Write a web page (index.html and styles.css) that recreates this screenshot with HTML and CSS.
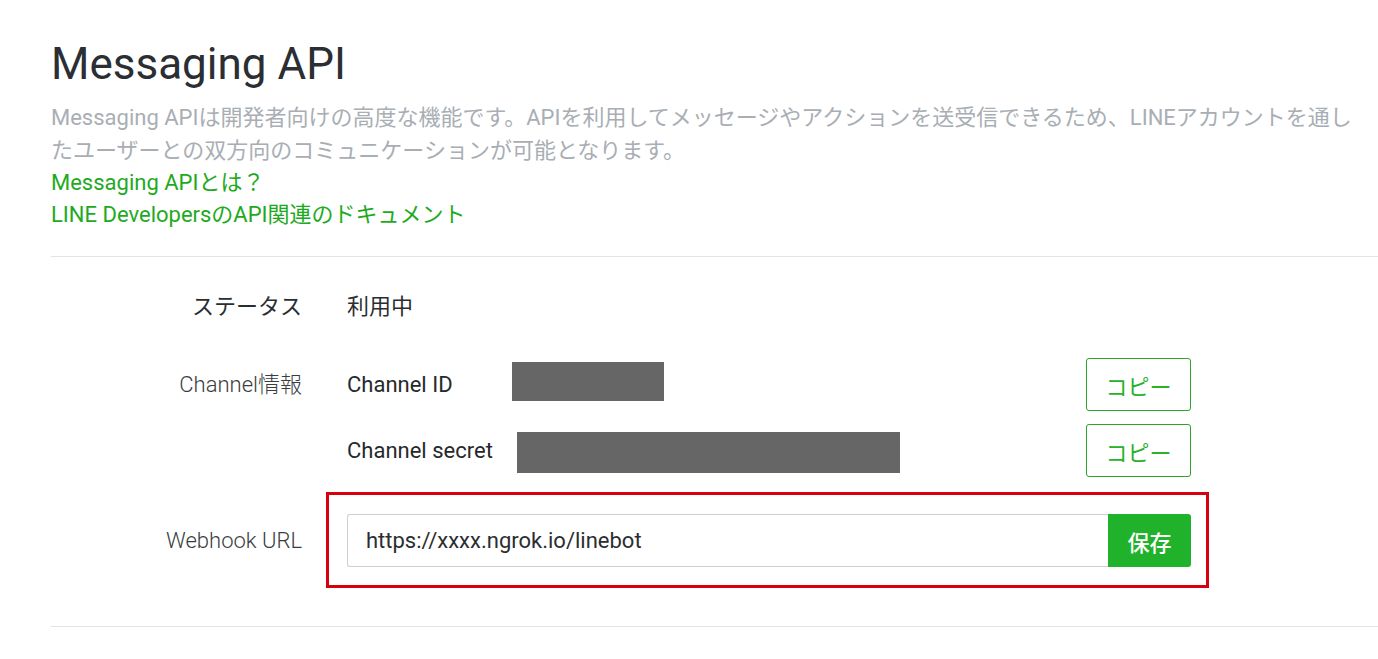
FILE: index.html
```html
<!DOCTYPE html>
<html lang="ja">
<head>
<meta charset="utf-8">
<title>Messaging API</title>
<link rel="stylesheet" href="styles.css">
</head>
<body>
<main class="page">
  <header class="intro">
    <h1 class="title">Messaging API</h1>
    <p class="desc">Messaging APIは開発者向けの高度な機能です。APIを利用してメッセージやアクションを送受信できるため、LINEアカウントを通し<br>たユーザーとの双方向のコミュニケーションが可能となります。</p>
    <ul class="links">
      <li><a href="#">Messaging APIとは？</a></li>
      <li><a href="#">LINE DevelopersのAPI関連のドキュメント</a></li>
    </ul>
  </header>

  <section class="settings">
    <div class="row row-status">
      <div class="label">ステータス</div>
      <div class="value">利用中</div>
    </div>

    <div class="row row-channel">
      <div class="label">Channel情報</div>
      <div class="value">
        <div class="sub">
          <span class="sub-label">Channel ID</span>
          <span class="redact redact-id"></span>
          <button class="copy">コピー</button>
        </div>
        <div class="sub">
          <span class="sub-label">Channel secret</span>
          <span class="redact redact-secret"></span>
          <button class="copy">コピー</button>
        </div>
      </div>
    </div>

    <div class="row row-webhook">
      <div class="label">Webhook URL</div>
      <div class="value webhook">
        <div class="input-group">
          <input class="url" type="text" value="https://xxxx.ngrok.io/linebot">
          <button class="save">保存</button>
        </div>
        <span class="highlight"></span>
      </div>
    </div>
  </section>
</main>
</body>
</html>
```

FILE: styles.css
```css
* { box-sizing: border-box; }

html, body {
  margin: 0;
  padding: 0;
  background: #ffffff;
}

body {
  font-family: Roboto, "Noto Sans CJK JP", sans-serif;
  font-size: 22px;
  color: #2b2e31;
  overflow: hidden;
}

.page {
  padding-left: 51px;
}

.intro {
  padding-top: 40px;
  padding-bottom: 25px;
  border-bottom: 1px solid #e3e3e3;
}

.title {
  margin: 0;
  font-size: 44px;
  line-height: 48px;
  font-weight: 400;
  color: #2b2e32;
}

.desc {
  margin: 13px 0 0;
  line-height: 33px;
  color: #a9aeb4;
  white-space: nowrap;
}

.links {
  list-style: none;
  margin: 0;
  padding: 0;
  line-height: 32px;
}

.links a {
  color: #1eaa1e;
  text-decoration: none;
}

.settings {
  padding-top: 35px;
  padding-bottom: 59px;
  border-bottom: 1px solid #e3e3e3;
}

.row {
  display: grid;
  grid-template-columns: 251px 844px;
  column-gap: 45px;
}

.label {
  text-align: right;
  color: #3a3d40;
  font-weight: 300;
}

.row-status .label,
.row-status .value {
  line-height: 30px;
}

.row-status .label { font-weight: 400; color: #2b2e31; }

.row-channel {
  margin-top: 36px;
}

.row-channel .label,
.row-webhook .label {
  line-height: 53px;
}

.sub {
  display: flex;
  align-items: center;
  height: 53px;
}

.sub + .sub {
  margin-top: 13px;
}

.sub-label {
  width: 165px;
  color: #26292c;
}

.redact {
  display: block;
  background: #666666;
}

.redact-id {
  width: 152px;
  height: 39px;
  margin-top: -6px;
}

.redact-secret {
  width: 383px;
  height: 41px;
  margin-left: 5px;
  margin-top: 4px;
}

.copy {
  margin-left: auto;
  width: 105px;
  height: 53px;
  border: 1px solid #2aa52a;
  border-radius: 3px;
  background: #ffffff;
  color: #27b227;
  font-family: Roboto, "Noto Sans CJK JP", sans-serif;
  font-size: 22px;
  padding: 0;
}

.row-webhook {
  margin-top: 37px;
}

.webhook {
  position: relative;
}

.input-group {
  display: flex;
  height: 53px;
}

.url {
  flex: 1;
  min-width: 0;
  height: 53px;
  border: 1px solid #cfcfcf;
  border-right: none;
  border-radius: 3px 0 0 3px;
  padding: 0 18px;
  font-family: Roboto, "Noto Sans CJK JP", sans-serif;
  font-size: 22px;
  color: #2b2e31;
  background: #ffffff;
}

.save {
  width: 83px;
  height: 53px;
  border: none;
  border-radius: 0 3px 3px 0;
  background: #21b22b;
  color: #ffffff;
  font-family: Roboto, "Noto Sans CJK JP", sans-serif;
  font-size: 22px;
  font-weight: 500;
  padding: 0;
}

.highlight {
  position: absolute;
  left: -21px;
  right: -18px;
  top: -22px;
  bottom: -21px;
  border: 3px solid #d8000c;
  pointer-events: none;
}
```
